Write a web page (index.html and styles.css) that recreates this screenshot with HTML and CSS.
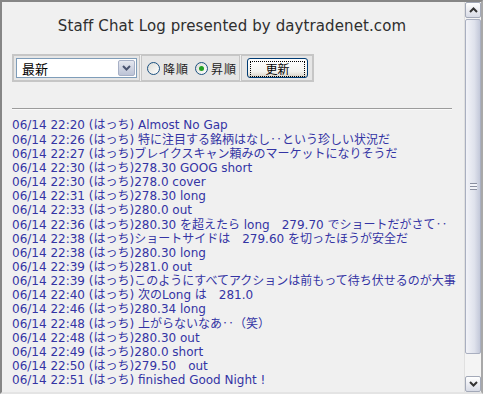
FILE: index.html
```html
<!DOCTYPE html>
<html lang="ja">
<head>
    <meta charset="UTF-8">
    <title>Staff Chat Log</title>
    <link rel="stylesheet" href="styles.css">
</head>
<body>
    <div class="frame">
        <div class="page">
            <h1 class="title">Staff Chat Log presented by daytradenet.com</h1>

            <div class="controls">
                <div class="cell">
                    <div class="select">
                        <span class="select-text">最新</span>
                        <span class="select-btn">
                            <svg width="9" height="6" viewBox="0 0 9 6"><path d="M1 1 L4.5 4.5 L8 1" fill="none" stroke="#4a5470" stroke-width="2"/></svg>
                        </span>
                    </div>
                </div>
                <div class="cell order">
                    <label class="radio"><span class="radio-dot"></span>降順</label>
                    <label class="radio"><span class="radio-dot checked"></span>昇順</label>
                </div>
                <div class="cell">
                    <button class="update"><span class="update-text">更新</span></button>
                </div>
            </div>

            <hr class="rule">

            <div class="log">
                <div class="line">06/14 22:20 (はっち) Almost No Gap</div>
                <div class="line">06/14 22:26 (はっち) 特に注目する銘柄はなし<span class="jp">‥</span>という珍しい状況だ</div>
                <div class="line">06/14 22:27 (はっち)ブレイクスキャン頼みのマーケットになりそうだ</div>
                <div class="line">06/14 22:30 (はっち)278.30 GOOG short</div>
                <div class="line">06/14 22:30 (はっち)278.0 cover</div>
                <div class="line">06/14 22:31 (はっち)278.30 long</div>
                <div class="line">06/14 22:33 (はっち)280.0 out</div>
                <div class="line">06/14 22:36 (はっち)280.30 を超えたら long　279.70 でショートだがさて<span class="jp">‥</span></div>
                <div class="line">06/14 22:38 (はっち)ショートサイドは　279.60 を切ったほうが安全だ</div>
                <div class="line">06/14 22:38 (はっち)280.30 long</div>
                <div class="line">06/14 22:39 (はっち)281.0 out</div>
                <div class="line">06/14 22:39 (はっち)このようにすべてアクションは前もって待ち伏せるのが大事</div>
                <div class="line">06/14 22:40 (はっち) 次のLong は　281.0</div>
                <div class="line">06/14 22:46 (はっち)280.34 long</div>
                <div class="line">06/14 22:48 (はっち) 上がらないなあ<span class="jp">‥</span>（笑）</div>
                <div class="line">06/14 22:48 (はっち)280.30 out</div>
                <div class="line">06/14 22:49 (はっち)280.0 short</div>
                <div class="line">06/14 22:50 (はっち)279.50　out</div>
                <div class="line">06/14 22:51 (はっち) finished Good Night !</div>
            </div>

            <hr class="rule">
        </div>

        <div class="scrollbar">
            <div class="sb-btn">
                <svg width="9" height="6" viewBox="0 0 9 6"><path d="M1 5 L4.5 1.5 L8 5" fill="none" stroke="#333" stroke-width="2"/></svg>
            </div>
            <div class="sb-thumb">
                <span class="grip"></span>
            </div>
            <div class="sb-track"></div>
            <div class="sb-btn">
                <svg width="9" height="6" viewBox="0 0 9 6"><path d="M1 1 L4.5 4.5 L8 1" fill="none" stroke="#333" stroke-width="2"/></svg>
            </div>
        </div>
    </div>
</body>
</html>
```

FILE: styles.css
```css
body {
    margin: 0;
    padding: 0;
    background-color: #f0f0f0;
    font-family: 'DejaVu Sans', 'Noto Sans CJK JP', sans-serif;
}
.frame {
    box-sizing: border-box;
    width: 483px;
    height: 394px;
    display: flex;
    border-style: solid;
    border-width: 2px;
    border-color: #868686 #a8a8a8 #e4e4e4 #868686;
    background-color: #f0f0f0;
    overflow: hidden;
}
.page {
    flex: 1;
    padding: 0 12px 0 10px;
    overflow: hidden;
}
.title {
    margin: 15px 0 0;
    font-size: 15px;
    font-weight: normal;
    line-height: 18px;
    letter-spacing: 0.1px;
    text-align: center;
    color: #2e2e2e;
}
.controls {
    display: inline-flex;
    gap: 1px;
    margin-top: 19px;
    border: 1px solid #c6c6c6;
    background-color: #f0f0f0;
}
.cell {
    display: flex;
    align-items: center;
    padding: 2px;
    border: 1px solid #c6c6c6;
    background-color: #e6e6e6;
}
.select {
    box-sizing: border-box;
    width: 121px;
    height: 20px;
    display: flex;
    align-items: center;
    justify-content: space-between;
    padding: 1px;
    border: 1px solid #7f9db9;
    background-color: #fff;
}
.select-text {
    padding-left: 4px;
    font-size: 13px;
    font-family: 'Noto Sans CJK JP', sans-serif;
    color: #000;
}
.select-btn {
    box-sizing: border-box;
    width: 17px;
    height: 16px;
    display: flex;
    align-items: center;
    justify-content: center;
    border: 1px solid #a7b0c6;
    border-radius: 2px;
    background: linear-gradient(#e4e7ef, #bcc3d6);
}
.order {
    gap: 6px;
    padding: 2px 2px 2px 5px;
}
.radio {
    display: flex;
    align-items: center;
    gap: 3px;
    font-size: 12px;
    letter-spacing: 1px;
    font-family: 'Noto Sans CJK JP', sans-serif;
    color: #222;
}
.radio-dot {
    box-sizing: border-box;
    width: 13px;
    height: 13px;
    display: flex;
    align-items: center;
    justify-content: center;
    border: 1px solid #1c5180;
    border-radius: 50%;
    background: linear-gradient(135deg, #dcdcd6, #ffffff);
}
.radio-dot.checked::after {
    content: "";
    width: 5px;
    height: 5px;
    border-radius: 50%;
    background-color: #21a121;
}
.update {
    box-sizing: border-box;
    width: 61px;
    height: 20px;
    margin: 0 2px 0 3px;
    padding: 2px;
    border: 1px solid #003c74;
    border-radius: 3px;
    background: linear-gradient(#ffffff, #f3f3ef 70%, #d6d0c5);
}
.update-text {
    display: block;
    height: 14px;
    line-height: 14px;
    border: 1px dotted #000;
    font-size: 12px;
    font-family: 'Noto Sans CJK JP', sans-serif;
    color: #000;
}
.rule {
    height: 0;
    margin: 26px 0 8px;
    border: 0;
    border-top: 1px solid #9c9c9c;
    border-bottom: 1px solid #fafafa;
}
.log {
    font-size: 12px;
    line-height: 14px;
    color: #3434a4;
}
.line {
    white-space: nowrap;
}
.jp {
    font-family: 'Noto Sans CJK JP', sans-serif;
}
.log + .rule {
    margin-top: 7px;
}
.scrollbar {
    width: 16px;
    display: flex;
    flex-direction: column;
    gap: 1px;
    background-color: #f4f4f4;
    border-left: 1px solid #e0e0e0;
}
.sb-btn {
    box-sizing: border-box;
    height: 16px;
    display: flex;
    align-items: center;
    justify-content: center;
    border: 1px solid #a3a9b8;
    border-radius: 2px;
    background: linear-gradient(#ffffff, #d8dbe6);
}
.sb-thumb {
    box-sizing: border-box;
    height: 335px;
    display: flex;
    align-items: center;
    justify-content: center;
    border: 1px solid #a9afc0;
    border-radius: 2px;
    background: linear-gradient(90deg, #f2f3f8, #dfe2ec 60%, #c3c8d9);
}
.grip {
    width: 7px;
    height: 5px;
    border-top: 1px solid #8a8fa0;
    border-bottom: 1px solid #8a8fa0;
    background: linear-gradient(#f2f3f8 40%, #8a8fa0 40%, #8a8fa0 60%, #f2f3f8 60%);
}
.sb-track {
    flex: 1;
}
```
